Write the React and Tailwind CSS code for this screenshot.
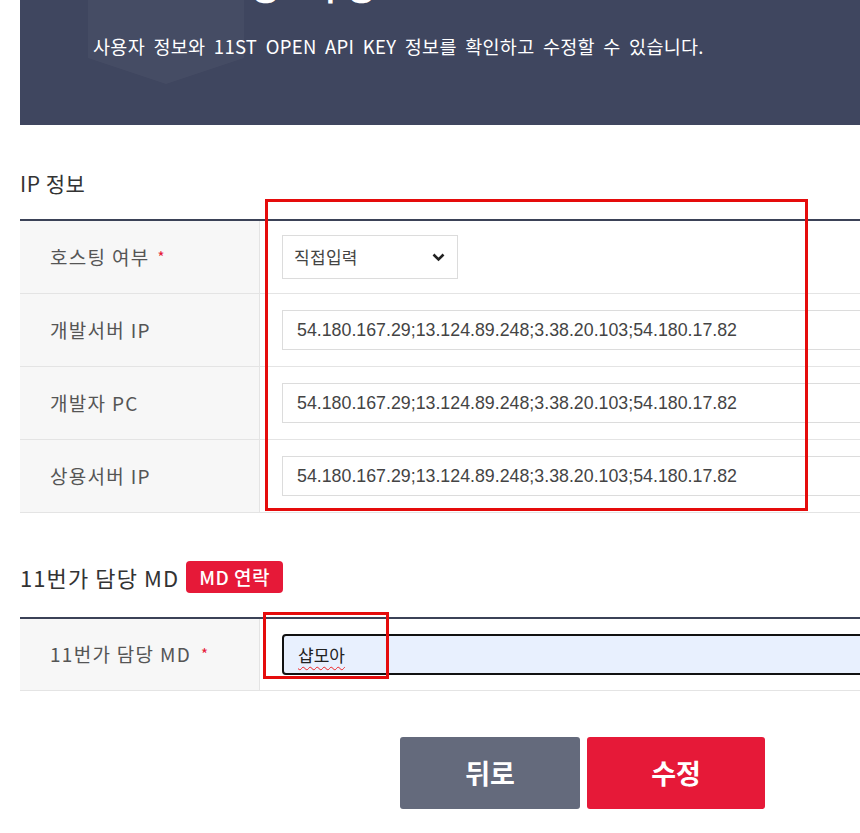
import React from "react";

const KR = { fontFamily: '"Noto Sans CJK KR", "Noto Sans", sans-serif' };

function Label({ children, required, starGap = "ml-[8px]" }) {
  return (
    <div className="w-[240px] shrink-0 bg-[#f7f7f7] border-r border-[#e4e4e4] flex items-center pl-[30px] text-[19px] tracking-[1.3px] text-[#555]">
      <span>{children}</span>
      {required && <span className={`${starGap} text-[15px] text-[#e61938]`}>*</span>}
    </div>
  );
}

function Row({ label, required, children }) {
  return (
    <div className="flex h-[73px] border-b border-[#e4e4e4]">
      <Label required={required}>{label}</Label>
      <div className="flex-1 flex items-center pl-[22px] overflow-hidden">{children}</div>
    </div>
  );
}

function IpInput() {
  return (
    <div
      className="h-[40px] w-[640px] shrink-0 border border-[#dcdcdc] flex items-center pl-[14px] text-[17.8px] text-[#444]"
      style={{ fontFamily: '"Liberation Sans", Arial, sans-serif' }}
    >
      54.180.167.29;13.124.89.248;3.38.20.103;54.180.17.82
    </div>
  );
}

export default function App() {
  return (
    <div className="relative w-[860px] h-[833px] bg-white overflow-hidden pl-5" style={KR}>
      {/* Banner */}
      <div className="relative h-[125px] bg-[#3f465f] overflow-hidden pl-[73px]">
        <svg className="absolute left-[68px] top-0" width="156" height="84" viewBox="0 0 156 84">
          <polygon points="0,0 156,0 156,58 78,84 0,58" fill="#ffffff" fillOpacity="0.035" />
        </svg>
        <div className="relative -mt-[34px] h-[40px] leading-[40px] text-[32px] font-bold text-white">
          OPEN API 정보 수정
        </div>
        <div className="relative mt-[28px] text-[18.5px] leading-[24px] text-white tracking-[0.3px] [word-spacing:4px]">
          사용자 정보와 11ST OPEN API KEY 정보를 확인하고 수정할 수 있습니다.
        </div>
      </div>

      {/* IP 정보 */}
      <div className="mt-[44px] h-[28px] leading-[28px] text-[21px] tracking-[0.5px] text-[#333]">IP 정보</div>
      <div className="mt-[22px] border-t-2 border-[#3b4257]">
        <Row label="호스팅 여부" required>
          <div className="h-[44px] w-[176px] border border-[#dcdcdc] flex items-center justify-between pl-[11px] pr-[12px] text-[17px] tracking-[0.3px] text-[#444]">
            <span>직접입력</span>
            <svg width="13" height="9" viewBox="0 0 13 9">
              <path d="M1.5 1.5 L6.5 6.5 L11.5 1.5" stroke="#222" strokeWidth="2.6" fill="none" />
            </svg>
          </div>
        </Row>
        <Row label="개발서버 IP">
          <IpInput />
        </Row>
        <Row label="개발자 PC">
          <IpInput />
        </Row>
        <Row label="상용서버 IP">
          <IpInput />
        </Row>
      </div>

      {/* MD */}
      <div className="mt-[48px] h-[32px] flex items-center gap-[7px]">
        <span className="text-[22px] tracking-[1.1px] text-[#333]">11번가 담당 MD</span>
        <span className="h-[32px] px-[13px] rounded-[4px] bg-[#e61938] text-white text-[19px] tracking-[0.5px] font-medium flex items-center">
          MD 연락
        </span>
      </div>
      <div className="mt-[24px] border-t-2 border-[#3b4257]">
        <div className="flex h-[72px] border-b border-[#e4e4e4]">
          <Label required starGap="ml-[10px]">11번가 담당 MD</Label>
          <div className="flex-1 flex items-center pl-[22px] overflow-hidden">
            <div className="h-[41px] w-[640px] shrink-0 border-2 border-[#111] rounded-[4px] bg-[#e8f0fe] flex items-center pl-[14px] text-[17px] text-[#222]">
              <span className="underline decoration-wavy decoration-[#e22] decoration-1 underline-offset-[4px]">샵모아</span>
            </div>
          </div>
        </div>
      </div>

      {/* Buttons */}
      <div className="mt-[46px] flex gap-[7px] pl-[380px]">
        <button className="w-[180px] h-[72px] rounded-[3px] bg-[#646a7c] text-white text-[27px] font-bold">뒤로</button>
        <button className="w-[178px] h-[72px] rounded-[3px] bg-[#e61938] text-white text-[27px] font-bold">수정</button>
      </div>

      {/* Annotation boxes */}
      <div className="absolute left-[265px] top-[199px] w-[543px] h-[312px] border-[3px] border-[#e50c0c] pointer-events-none" />
      <div className="absolute left-[263px] top-[612px] w-[126px] h-[67px] border-[3px] border-[#e50c0c] pointer-events-none" />
    </div>
  );
}
